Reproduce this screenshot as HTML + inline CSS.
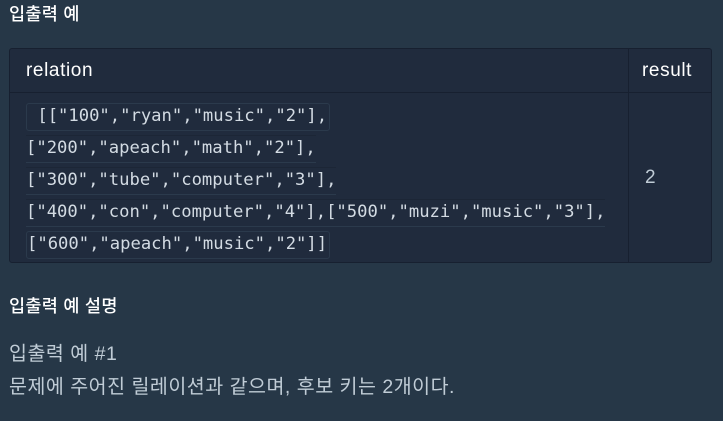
<!DOCTYPE html>
<html><head><meta charset="utf-8"><style>
body{margin:0;width:723px;height:421px;background:#263747;font-family:"Liberation Sans","Noto Sans CJK KR",sans-serif;overflow:hidden;position:relative;color:#b2c0cc}
.h{position:absolute;left:9px;color:#fff;font-size:17.5px;font-weight:500;line-height:20px;letter-spacing:0.3px}
.tbl{position:absolute;left:9px;top:48px;width:701px;height:213px;background:#202b3d;border:1px solid #172030;border-radius:3px}
.hd{position:absolute;left:0;top:0;width:701px;height:43px;border-bottom:1px solid #172030}
.vd{position:absolute;left:618px;top:0;width:1px;height:213px;background:#172030}
.th{position:absolute;top:11px;color:#fff;font-size:19px;letter-spacing:0.6px;line-height:22px}
.code{position:absolute;left:16px;font-family:"DejaVu Sans Mono","Liberation Mono",monospace;font-size:17.2px;color:#d3dbe3;line-height:24px;height:26px;white-space:pre;border-bottom:1px solid #2b3a4c;border-top:1px solid #1c2636}
.p{position:absolute;left:9px;font-size:19.5px;letter-spacing:0.5px;line-height:22px;color:#c0ccd6}
</style></head><body>
<div class="h" style="top:4px">입출력 예</div>
<div class="tbl">
<div class="hd"></div><div class="vd"></div>
<div class="th" style="left:16px">relation</div>
<div class="th" style="left:632px">result</div>
<div class="code" style="top:54px;border:1px solid #2b3a4c;border-radius:3px;padding-right:2px"> [["100","ryan","music","2"],</div>
<div class="code" style="top:86px">["200","apeach","math","2"],</div>
<div class="code" style="top:118px">["300","tube","computer","3"],</div>
<div class="code" style="top:150px">["400","con","computer","4"],["500","muzi","music","3"],</div>
<div class="code" style="top:182px;border:1px solid #2b3a4c;border-radius:3px;padding-right:2px">["600","apeach","music","2"]]</div>
<div class="th" style="left:635px;top:118px;color:#c0ccd6">2</div>
</div>
<div class="h" style="top:296px">입출력 예 설명</div>
<div class="p" style="top:343px">입출력 예 #1</div>
<div class="p" style="top:376px">문제에 주어진 릴레이션과 같으며, 후보 키는 2개이다.</div>
</body></html>
